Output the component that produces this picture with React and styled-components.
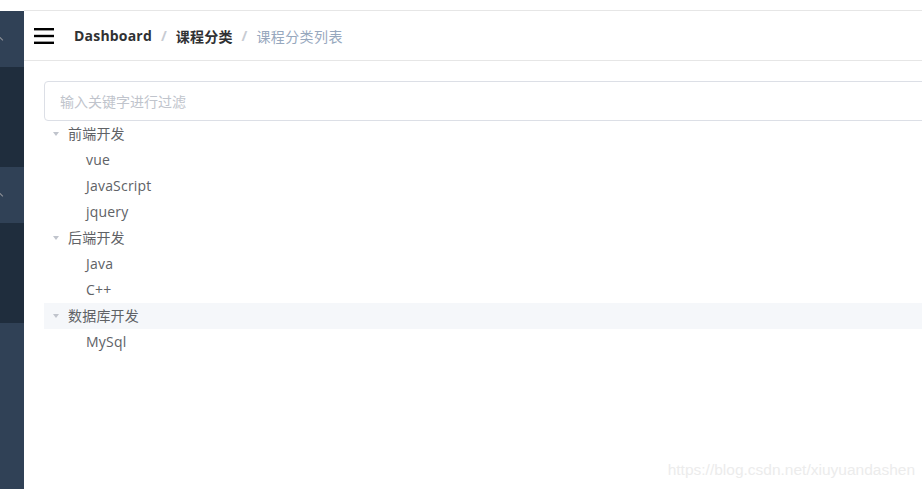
import React from "react";
import styled, {createGlobalStyle} from "styled-components";

const GlobalStyle = createGlobalStyle`
  html, body {
    margin: 0;
    padding: 0;
    background: #fff;
  }
  body {
    font-family: "Open Sans", "Noto Sans CJK SC", sans-serif;
    -webkit-font-smoothing: antialiased;
  }
`

const Page = styled.div`
  display: flex;
  height: 489px;
  width: 922px;
  overflow: hidden;
  position: relative;
`

const Sidebar = styled.div`
  width: 24px;
  margin-top: 11px;
  display: flex;
  flex-direction: column;
  background: #304156;
  flex-shrink: 0;
`

const MenuTitle = styled.div`
  height: 56px;
  display: flex;
  align-items: center;
  background: #304156;
`

const SubMenu = styled.div`
  height: 100px;
  background: #1f2d3d;
`

const Arrow = styled.span`
  width: 5px;
  height: 5px;
  margin-left: -4px;
  border-top: 1.5px solid #909399;
  border-right: 1.5px solid #909399;
  transform: rotate(-45deg);
  margin-top: 2px;
`

const Main = styled.div`
  flex: 1;
  padding-top: 10px;
  min-width: 0;
`

const Header = styled.div`
  height: 49px;
  border-top: 1px solid #e6e6e6;
  border-bottom: 1px solid #e6e6e6;
  display: flex;
  align-items: center;
  padding-left: 10px;
`

const Hamburger = styled.svg`
  width: 20px;
  height: 20px;
  margin-right: 20px;
  margin-top: 2px;
`

const Crumb = styled.span`
  font-size: 14px;
  font-weight: ${props => (props.$last ? 400 : 700)};
  color: ${props => (props.$last ? "#97a8be" : "#303133")};
  letter-spacing: ${props => (props.$last ? "0.4px" : "0.2px")};
`

const Sep = styled.span`
  margin: 0 9px;
  font-size: 14px;
  font-weight: 700;
  color: #c8ccd3;
`

const Content = styled.div`
  padding: 20px 0 0 20px;
`

const FilterInput = styled.input`
  box-sizing: border-box;
  width: 900px;
  height: 40px;
  border: 1px solid #dcdfe6;
  border-radius: 4px;
  padding: 0 15px;
  font-family: inherit;
  font-size: 14px;
  color: #606266;
  outline: none;
  display: block;

  &::placeholder {
    color: #c0c4cc;
  }
`

const Tree = styled.div`
  display: flex;
  flex-direction: column;
`

const Node = styled.div`
  height: 26px;
  box-sizing: border-box;
  padding-bottom: 2px;
  display: flex;
  align-items: center;
  padding-left: ${props => props.$level * 18}px;
  background: ${props => (props.$active ? "#f5f7fa" : "transparent")};
  font-size: 14px;
  letter-spacing: 0.2px;
  color: #606266;
`

const Caret = styled.span`
  width: 24px;
  height: 24px;
  display: flex;
  align-items: center;
  justify-content: center;

  &::before {
    content: "";
    display: ${props => (props.$leaf ? "none" : "block")};
    border-left: 3.5px solid transparent;
    border-right: 3.5px solid transparent;
    border-top: 4px solid #c0c4cc;
    margin-top: 1px;
  }
`

const Watermark = styled.div`
  position: absolute;
  right: 7px;
  bottom: 10px;
  font-family: "Liberation Sans", Arial, sans-serif;
  font-size: 15.5px;
  color: #ececec;
`

const tree = [
    {label: "前端开发", children: ["vue", "JavaScript", "jquery"]},
    {label: "后端开发", children: ["Java", "C++"]},
    {label: "数据库开发", children: ["MySql"], active: true},
]

const App = () => {
    return (
        <>
            <GlobalStyle/>
            <Page>
                <Sidebar>
                    <MenuTitle><Arrow/></MenuTitle>
                    <SubMenu/>
                    <MenuTitle><Arrow/></MenuTitle>
                    <SubMenu/>
                </Sidebar>
                <Main>
                    <Header>
                        <Hamburger viewBox="0 0 20 20">
                            <rect x="0" y="1" width="20" height="2.4" fill="#000"/>
                            <rect x="0" y="7.8" width="20" height="2.4" fill="#000"/>
                            <rect x="0" y="14.6" width="20" height="2.4" fill="#000"/>
                        </Hamburger>
                        <Crumb>Dashboard</Crumb>
                        <Sep>/</Sep>
                        <Crumb>课程分类</Crumb>
                        <Sep>/</Sep>
                        <Crumb $last>课程分类列表</Crumb>
                    </Header>
                    <Content>
                        <FilterInput placeholder="输入关键字进行过滤"/>
                        <Tree>
                            {tree.map(group => (
                                <React.Fragment key={group.label}>
                                    <Node $level={0} $active={group.active}>
                                        <Caret/>
                                        {group.label}
                                    </Node>
                                    {group.children.map(child => (
                                        <Node key={child} $level={1}>
                                            <Caret $leaf/>
                                            {child}
                                        </Node>
                                    ))}
                                </React.Fragment>
                            ))}
                        </Tree>
                    </Content>
                </Main>
                <Watermark>https://blog.csdn.net/xiuyuandashen</Watermark>
            </Page>
        </>
    )
}

export default App
